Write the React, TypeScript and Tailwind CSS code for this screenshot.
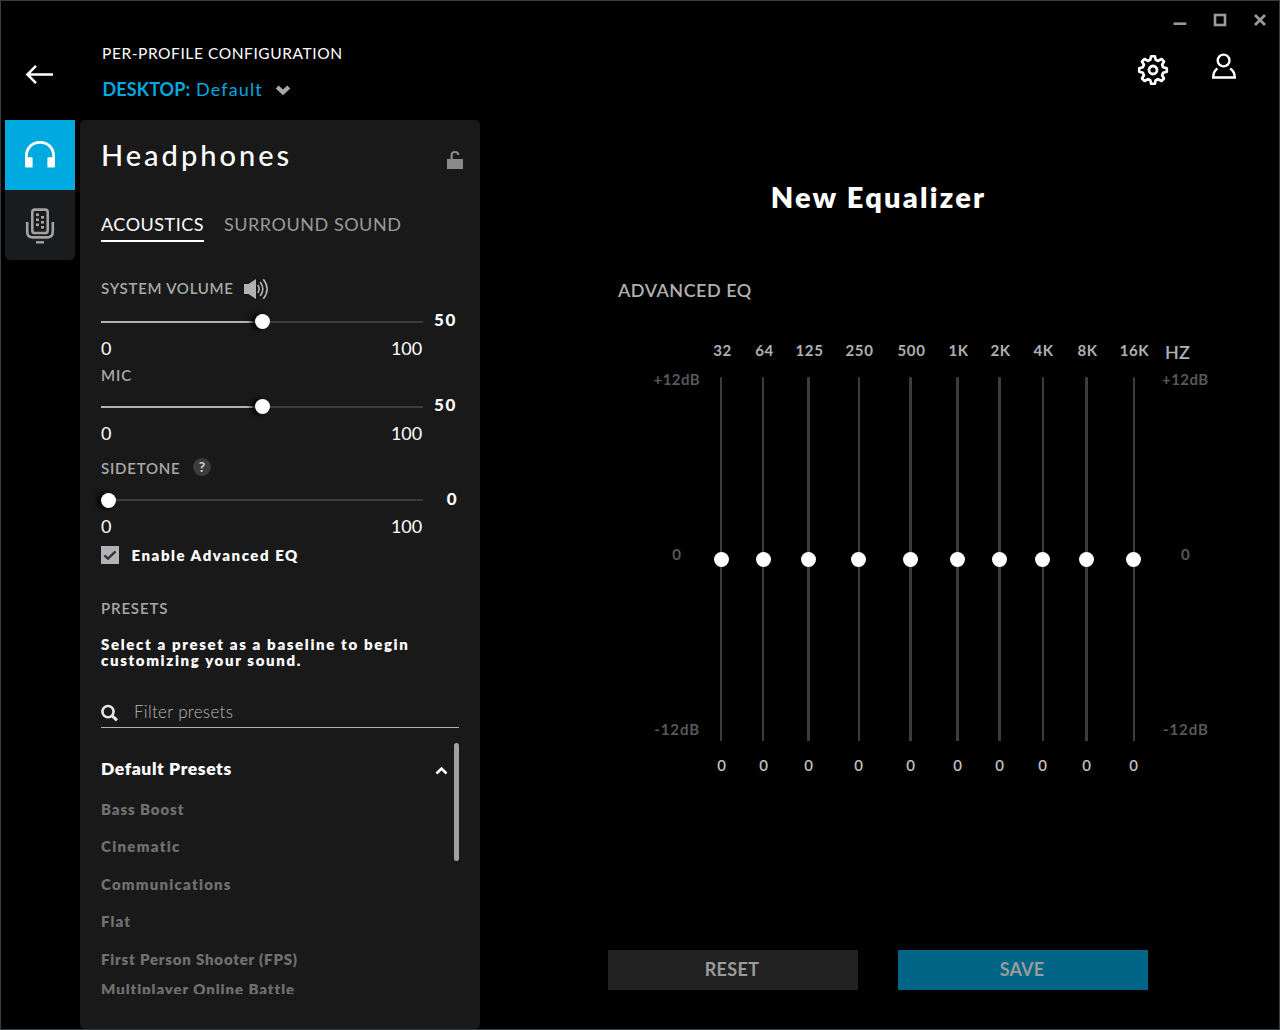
import React from 'react';

type Band = { hz: string; gap: string; track: string };

const bands: Band[] = [
  { hz: '32', gap: 'ml-0', track: 'ml-[19px] w-[2px]' },
  { hz: '64', gap: 'ml-[1px]', track: 'ml-[19px] w-[2px]' },
  { hz: '125', gap: 'ml-[4px]', track: 'ml-[19px] w-[3px]' },
  { hz: '250', gap: 'ml-[9px]', track: 'ml-[20px] w-[2px]' },
  { hz: '500', gap: 'ml-[11px]', track: 'ml-[19px] w-[3px]' },
  { hz: '1K', gap: 'ml-[6px]', track: 'ml-[19px] w-[3px]' },
  { hz: '2K', gap: 'ml-[1px]', track: 'ml-[19px] w-[3px]' },
  { hz: '4K', gap: 'ml-[2px]', track: 'ml-[20px] w-[2px]' },
  { hz: '8K', gap: 'ml-[3px]', track: 'ml-[19px] w-[3px]' },
  { hz: '16K', gap: 'ml-[6px]', track: 'ml-[20px] w-[2px]' },
];

const presets = [
  { name: 'Bass Boost', cls: 'h-[37px] tracking-[0.9px]' },
  { name: 'Cinematic', cls: 'h-[38px] tracking-[1.3px]' },
  { name: 'Communications', cls: 'h-[37px] tracking-[1.22px]' },
  { name: 'Flat', cls: 'h-[38px] tracking-[1.13px]' },
  { name: 'First Person Shooter (FPS)', cls: 'h-[30px] tracking-[0.8px]' },
  { name: 'Multiplayer Online Battle', cls: 'h-[30px] tracking-[0.92px]' },
];

function Slider({ value, thumb }: { value: number; thumb: string }) {
  return (
    <div className="relative h-4 w-[322px]">
      <div className="absolute inset-x-0 top-[7px] h-[2px] bg-[#3c3c3c]" />
      <div className="absolute left-0 top-[7px] h-[2px] bg-[#b1b1b6]" style={{ width: `${value}%` }} />
      <div
        className={`absolute size-[15px] rounded-full bg-white shadow-[-4px_0_5px_rgba(0,0,0,0.9)] ${thumb}`}
        style={{ left: `${Math.round((value / 100) * (322 - 15))}px` }}
      />
    </div>
  );
}

function VolumeRow({ value, thumb, valueClass }: { value: number; thumb: string; valueClass: string }) {
  return (
    <>
      <div className="flex">
        <Slider value={value} thumb={thumb} />
        <span className={`h-4 w-[34px] text-right text-[17px] font-black ${valueClass}`}>{value}</span>
      </div>
      <div className="flex h-[28px] w-[322px] justify-between pt-[8px] text-[18px] leading-[20px]">
        <span>0</span>
        <span className="pr-[1px] tracking-[-0.1px]">100</span>
      </div>
    </>
  );
}

function DeviceTabs() {
  return (
    <div className="flex w-[70px] flex-col">
      <div className="flex h-[70px] items-center justify-center bg-[#00a9e0]">
        <svg width="70" height="70" viewBox="0 0 70 70" fill="none">
          <path d="M21.4 40V36C21.4 27.8 27.4 22.4 35 22.4S48.6 27.8 48.6 36V40" stroke="#fff" strokeWidth="2.8" />
          <path d="M20 36H21V37.3H26.6Q27.6 37.3 27.6 38.3V47.6H21.5Q20 47.6 20 46ZM50 36V46Q50 47.6 48.5 47.6H42.4V38.3Q42.4 37.3 43.4 37.3H49V36Z" fill="#fff" />
        </svg>
      </div>
      <div className="h-[70px] rounded-b-[5px] bg-[#1a1b1d]">
        <svg width="70" height="70" viewBox="0 0 70 70" fill="none" stroke="#a3a3a3" strokeWidth="2.6">
          <rect x="27.3" y="19.6" width="15.4" height="23.4" rx="2.6" />
          <path d="M22.2 32V41.5Q22.2 47.4 28 47.4H42Q47.8 47.4 47.8 41.5V32" />
          <path d="M31 52.3H39" strokeWidth="2.4" />
          <g fill="#a3a3a3" stroke="none">
            <rect x="31" y="23.5" width="3" height="2.6" />
            <rect x="31" y="28.5" width="3" height="2.6" />
            <rect x="31" y="33.5" width="3" height="2.6" />
            <rect x="36" y="26" width="3" height="2.6" />
            <rect x="36" y="31" width="3" height="2.6" />
            <rect x="36" y="36" width="3" height="2.6" />
          </g>
        </svg>
      </div>
    </div>
  );
}

function Header() {
  return (
    <header className="flex h-[119px]">
      <svg className="ml-[23px] mt-[62px] shrink-0" width="30" height="22" viewBox="0 0 30 22" fill="none" stroke="#fff" strokeWidth="2.5">
        <path d="M3.2 11.5H29M12 2.8L3.4 11.5L12 20.2" />
      </svg>
      <div className="ml-[48px] flex flex-col pt-[41px]">
        <div className="h-[22px] whitespace-nowrap text-[15.5px] leading-[22px] tracking-[0.58px]">PER-PROFILE CONFIGURATION</div>
        <div className="mt-[13px] flex h-[22px] items-center whitespace-nowrap text-[18px] leading-[22px] text-[#00a9e0]">
          <span className="mt-[1px] w-[94px] pl-[0.5px] font-bold tracking-[0.1px]">DESKTOP:</span>
          <span className="mt-[1px] w-[78.5px] tracking-[1.15px]">Default</span>
          <svg className="mt-[4px]" width="16" height="11" viewBox="0 0 16 11" fill="none" stroke="#a9a9a9" strokeWidth="4.2">
            <path d="M2.2 2L8 7.3L13.8 2" />
          </svg>
        </div>
      </div>
      <div className="ml-auto flex flex-col items-end">
        <div className="flex pr-[12px] pt-[11px]">
          <svg width="96" height="16" viewBox="0 0 96 16" fill="none" stroke="#999">
            <path d="M2.5 11.7H15.3" strokeWidth="2.6" />
            <rect x="44" y="3" width="10" height="10" strokeWidth="2.6" />
            <path d="M84 3L94 13M94 3L84 13" strokeWidth="2.8" />
          </svg>
        </div>
        <div className="flex pr-[40px] pt-[24px]">
          <svg width="104" height="38" viewBox="0 0 104 38" fill="none" stroke="#fff" strokeWidth="2.4" strokeLinejoin="round">
            <path
              d="M15.1 4.2H18.9L20 8.1L22.6 9.2L26.1 7.2L28.8 9.9L26.8 13.4L27.9 16L31.8 17.1V20.9L27.9 22L26.8 24.6L28.8 28.1L26.1 30.8L22.6 28.8L20 29.9L18.9 33.8H15.1L14 29.9L11.4 28.8L7.9 30.8L5.2 28.1L7.2 24.6L6.1 22L2.2 20.9V17.1L6.1 16L7.2 13.4L5.2 9.9L7.9 7.2L11.4 9.2L14 8.1Z"
              transform="translate(18 18) scale(0.93) translate(-17 -19)"
              strokeWidth="2.9"
            />
            <circle cx="18" cy="18" r="4" strokeWidth="2.8" />
            <circle cx="88.6" cy="8.5" r="5.9" />
            <path d="M82.4 16.4C79.6 18.4 78.2 21.2 78.2 25.5H99.8C99.8 21.2 98.2 18.4 95.2 16.4" strokeLinejoin="miter" />
          </svg>
        </div>
      </div>
    </header>
  );
}

function SidePanel() {
  return (
    <section className="ml-[5px] flex h-[909px] w-[400px] flex-col rounded-[5px] bg-[#191919] pl-[21px] text-white">
      <div className="flex h-[70px] items-center justify-between pr-[17px]">
        <h1 className="text-[29px] font-medium leading-[34px] tracking-[3px]">Headphones</h1>
        <svg className="mt-[10px]" width="17" height="20" viewBox="0 0 17 20" fill="none">
          <rect x="1" y="9" width="16" height="10" fill="#898989" />
          <path d="M5.6 9.5V5.5C5.6 2.9 7 2 9 2S12.2 2.8 12.4 4.8" stroke="#898989" strokeWidth="2.2" />
        </svg>
      </div>
      <div className="flex gap-[20px] pt-[22px] text-[18px] leading-[25px]">
        <span className="h-[30px] w-[103px] whitespace-nowrap border-b-2 border-white tracking-[0.5px]">ACOUSTICS</span>
        <span className="whitespace-nowrap tracking-[0.53px] text-[#9a9a9a]">SURROUND SOUND</span>
      </div>
      <div className="mt-[37px] flex h-[20px] items-center text-[15px] font-semibold leading-[20px] text-[#a9a9a9]">
        <span className="-mt-[2px] w-[143px] tracking-[0.72px]">SYSTEM VOLUME</span>
        <svg width="25" height="22" viewBox="0 0 25 22" fill="none" stroke="#b1b1b6">
          <path d="M0 6H4.5L12 1V21L4.5 16H0Z" fill="#b1b1b6" stroke="none" />
          <path d="M13.8 7Q16.4 11 13.8 15" strokeWidth="1.6" />
          <path d="M16.2 4Q21.5 11 16.2 18" strokeWidth="1.6" />
          <path d="M19.3 1.2Q27 11 19.3 20.8" strokeWidth="1.6" />
        </svg>
      </div>
      <div className="mt-[15px]"><VolumeRow value={50} thumb="top-0" valueClass="leading-[12px] tracking-[1.6px]" /></div>
      <div className="mt-[7px] h-[20px] text-[15px] font-semibold leading-[20px] tracking-[0.9px] text-[#a9a9a9]">MIC</div>
      <div className="mt-[14px]"><VolumeRow value={50} thumb="top-0" valueClass="leading-[12px] tracking-[1.6px]" /></div>
      <div className="mt-[15px] flex h-[20px] items-center text-[15px] font-semibold leading-[20px] text-[#a9a9a9]">
        <span className="w-[92px] tracking-[0.78px]">SIDETONE</span>
        <span className="mt-[-2px] flex size-[18px] items-center justify-center rounded-full bg-[#3c3c3c] text-[14px] font-bold text-[#d0d0d0]">?</span>
      </div>
      <div className="mt-[14px]"><VolumeRow value={0} thumb="top-[1px]" valueClass="leading-[14px] tracking-[0.5px]" /></div>
      <div className="mt-[9px] flex h-[20px] items-center">
        <svg width="18" height="18" viewBox="0 0 18 18" fill="none">
          <rect width="18" height="18" fill="#b1b1b6" />
          <path d="M3.4 9.3L7 12.7L14.5 5.3" stroke="#333" strokeWidth="2.4" />
        </svg>
        <span className="ml-[12.5px] text-[15px] font-extrabold leading-[20px] tracking-[1.54px]">Enable Advanced EQ</span>
      </div>
      <div className="mt-[33px] text-[15px] font-semibold leading-[20px] tracking-[0.85px] text-[#a9a9a9]">PRESETS</div>
      <div className="mt-[18px] whitespace-nowrap text-[15px] font-extrabold leading-[16px] tracking-[1.65px]">
        Select a preset as a baseline to begin
        <br />
        customizing your sound.
      </div>
      <div className="mt-[29px] flex h-[31px] w-[358px] items-center border-b border-[#b1b1b6]">
        <svg className="mt-[2px]" width="18" height="18" viewBox="0 0 18 18" fill="none" stroke="#e6e6e6">
          <circle cx="7" cy="7.6" r="5.6" strokeWidth="2.6" />
          <path d="M11 11.6L16 16.4" strokeWidth="3" />
        </svg>
        <span className="ml-[15px] text-[17px] font-light leading-[20px] tracking-[0.31px] text-[#b8b8b8]">Filter presets</span>
      </div>
      <div className="mt-[15px] flex h-[251px] w-[358px] overflow-hidden">
        <div className="w-[353px]">
          <div className="flex h-[49px] items-center justify-between pr-[6px] pt-[3px]">
            <span className="text-[17.5px] font-extrabold leading-[20px] tracking-[0.6px]">Default Presets</span>
            <svg className="mt-[2px]" width="13" height="9" viewBox="0 0 13 9" fill="none" stroke="#fff" strokeWidth="2.6">
              <path d="M1.5 7.5L6.5 2.5L11.5 7.5" />
            </svg>
          </div>
          <div className="pt-[7px] text-[15px] font-extrabold leading-[20px] text-[#707070]">
            {presets.map((p) => (
              <div key={p.name} className={p.cls}>{p.name}</div>
            ))}
          </div>
        </div>
        <div className="h-[118px] w-[5px] rounded-full bg-[#a0a0a0]" />
      </div>
    </section>
  );
}

function Equalizer() {
  return (
    <main className="flex flex-1 flex-col pl-[128px] text-[#b0b0b0]">
      <h2 className="mt-[60px] w-[541px] text-center text-[29px] font-extrabold leading-[34px] tracking-[2.2px] text-white">New Equalizer</h2>
      <div className="ml-[10px] mt-[66px] text-[18px] font-semibold leading-[20px] tracking-[0.5px]">ADVANCED EQ</div>
      <div className="mt-[40px] flex h-[436px]">
        <div className="flex w-[93px] flex-col items-end pt-[29px] text-[15px] font-bold leading-[20px] text-[#585858]">
          <span className="pr-[1px] tracking-[0.4px]">+12dB</span>
          <span className="mt-[155px] pr-[20px]">0</span>
          <span className="mt-[155px] whitespace-nowrap pr-[1px] tracking-[0.9px]">-12dB</span>
        </div>
        <div className="flex">
          {bands.map((b) => (
            <div key={b.hz} className={`flex w-[41px] flex-col ${b.gap}`}>
              <span className="h-[37px] pl-[2px] text-center text-[15px] font-bold leading-[21px] tracking-[0.6px]">{b.hz}</span>
              <div className="relative h-[364px]">
                <div className={`h-full rounded-t-[1px] bg-[#3c3c3c] ${b.track}`} />
                <div className="absolute left-[13px] top-[174.5px] size-[15px] rounded-full bg-white" />
              </div>
              <span className="mt-[14px] text-center text-[15px] font-semibold leading-[20px] text-[#c0c0c0]">0</span>
            </div>
          ))}
        </div>
        <div className="flex flex-col pl-[8px] text-[15px] font-bold leading-[20px] text-[#585858]">
          <span className="pl-[3px] pt-[2px] text-[18px] font-semibold tracking-[0.3px] text-[#b0b0b0]">HZ</span>
          <span className="mt-[7px] tracking-[0.45px]">+12dB</span>
          <span className="mt-[155px] pl-[19px]">0</span>
          <span className="mt-[155px] pl-[1px] tracking-[0.9px]">-12dB</span>
        </div>
      </div>
      <div className="mt-[174px] flex gap-[40px] text-[18px] font-bold text-[#9b9b9b]">
        <button className="h-[40px] w-[250px] bg-[#222] pb-[2px] pr-[2px] tracking-[0.34px]">RESET</button>
        <button className="h-[40px] w-[250px] bg-[#006587] pb-[2px] pr-[2px] tracking-[0.2px]">SAVE</button>
      </div>
    </main>
  );
}

export default function App() {
  return (
    <div className="h-[1030px] w-[1280px] overflow-hidden border border-[#343c44] bg-black font-['Lato',sans-serif] text-white">
      <Header />
      <div className="flex h-[909px] pl-[4px]">
        <DeviceTabs />
        <SidePanel />
        <Equalizer />
      </div>
    </div>
  );
}
